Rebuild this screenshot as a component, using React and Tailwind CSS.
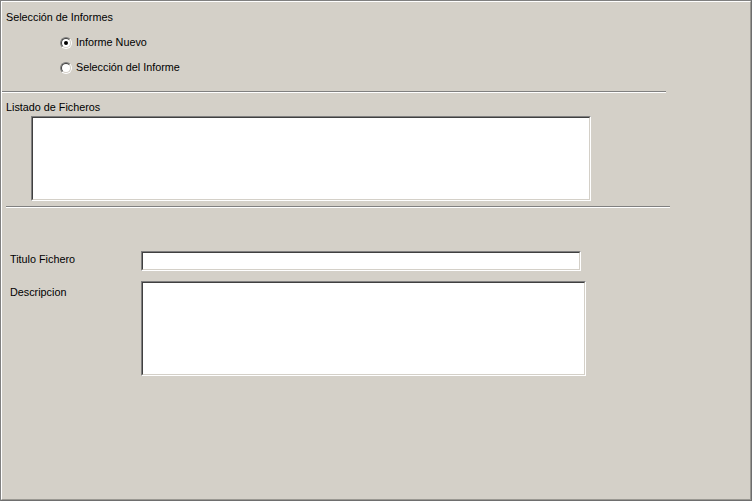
import React from "react";

const Inset = ({ className, children }) => (
  <div className={`border border-[#808080] border-r-white border-b-white ${className}`}>
    <div className="h-full w-full border border-[#404040] border-r-[#d4d0c8] border-b-[#d4d0c8] bg-white">
      {children}
    </div>
  </div>
);

const Radio = ({ checked, label }) => (
  <div className="flex items-center h-[13px] ml-[58px]">
    <div className="w-[12px] h-[12px] rounded-full border border-[#808080] border-r-white border-b-white">
      <div className="w-full h-full rounded-full border border-[#404040] border-r-[#d4d0c8] border-b-[#d4d0c8] bg-white flex items-center justify-center">
        {checked && <div className="w-[4px] h-[4px] rounded-full bg-black" />}
      </div>
    </div>
    <span className="ml-[4px] leading-[13px]">{label}</span>
  </div>
);

const Separator = ({ className }) => (
  <div className={`h-[2px] border-t border-t-[#808080] border-b border-b-white ${className}`} />
);

export default function App() {
  return (
    <div
      className="w-[752px] h-[501px] bg-[#d4d0c8] border border-[#808080] border-r-[#6e6e6e] border-b-[#6e6e6e] text-[10.8px] text-black"
      style={{ fontFamily: '"Liberation Sans", Arial, sans-serif' }}
    >
      <div className="w-full h-full border border-white border-r-[#9a9892] border-b-[#9a9892]">
        <div className="pl-[4px] pt-[9px] leading-[13px] h-[22px]">Selección de Informes</div>

        <div className="mt-[12px] flex flex-col gap-[12px]">
          <Radio checked label="Informe Nuevo" />
          <Radio label="Selección del Informe" />
        </div>

        <Separator className="mt-[17px] w-[664px]" />

        <div className="pl-[4px] mt-[8px] leading-[13px] h-[13px]">Listado de Ficheros</div>

        <Inset className="ml-[29px] mt-[2px] w-[560px] h-[85px]" />

        <Separator className="mt-[5px] ml-[4px] w-[664px]" />

        <div className="mt-[43px] ml-[8px] flex flex-col gap-[10px]">
          <div className="flex items-start">
            <div className="w-[131px] pt-[2px] leading-[13px]">Titulo Fichero</div>
            <Inset className="w-[440px] h-[20px]" />
          </div>
          <div className="flex items-start">
            <div className="w-[131px] pt-[5px] leading-[13px]">Descripcion</div>
            <Inset className="w-[445px] h-[95px]" />
          </div>
        </div>
      </div>
    </div>
  );
}
